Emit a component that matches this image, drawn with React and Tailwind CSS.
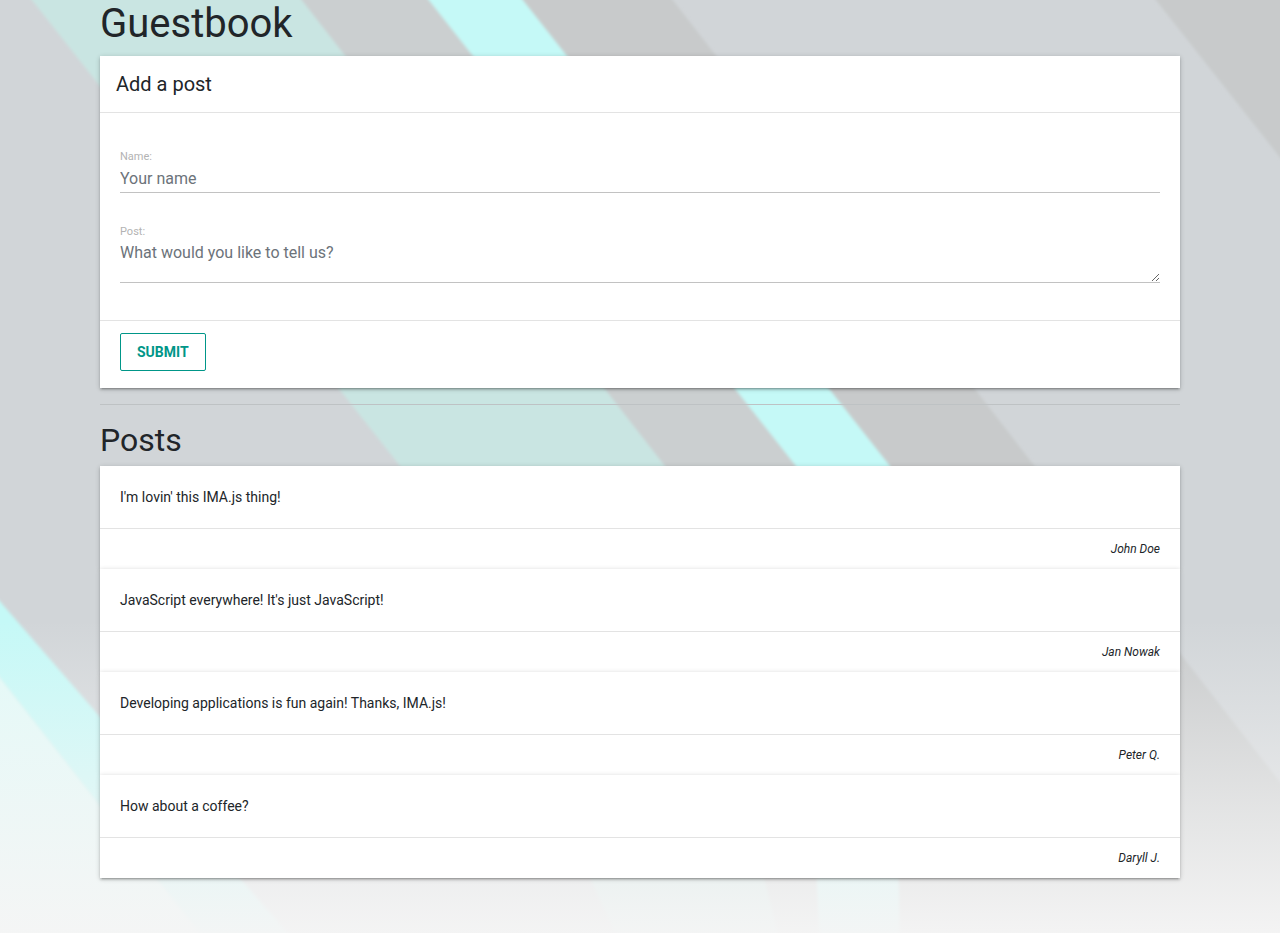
import React from 'react';

const posts = [
  { text: "I'm lovin' this IMA.js thing!", author: 'John Doe' },
  { text: "JavaScript everywhere! It's just JavaScript!", author: 'Jan Nowak' },
  { text: 'Developing applications is fun again! Thanks, IMA.js!', author: 'Peter Q.' },
  { text: 'How about a coffee?', author: 'Daryll J.' },
];

const cardShadow =
  'shadow-[0_2px_2px_0_rgba(0,0,0,0.14),0_3px_1px_-2px_rgba(0,0,0,0.12),0_1px_5px_0_rgba(0,0,0,0.2)]';

// diagonal material-style backdrop
const Backdrop = () => (
  <svg
    className="absolute inset-0 w-full h-full"
    viewBox="0 0 1280 933"
    preserveAspectRatio="none"
  >
    <defs>
      <linearGradient id="fade" x1="0" y1="620" x2="0" y2="933" gradientUnits="userSpaceOnUse">
        <stop offset="0" stopColor="#f5f5f5" stopOpacity="0" />
        <stop offset="0.6" stopColor="#f5f5f5" stopOpacity="0.6" />
        <stop offset="1" stopColor="#f5f5f5" stopOpacity="0.96" />
      </linearGradient>
      <filter id="soft" x="-5%" y="-5%" width="110%" height="110%">
        <feGaussianBlur stdDeviation="1.4" />
      </filter>
    </defs>
    <rect width="1280" height="933" fill="#d1d5d8" />
    <g filter="url(#soft)">
      <polygon points="24,-10 294,-10 665,466 780,943 620,943 400,466" fill="#c9e5e2" />
      <polygon points="294,-10 421,-10 796,466 820,943 780,943 665,466" fill="#cbcfd0" />
      <polygon points="421,-10 515,-10 890,466 900,943 820,943 796,466" fill="#c5f9f7" />
      <polygon points="515,-10 665,-10 1290,795 1290,943 900,943 890,466" fill="#c8cacb" />
      <polygon points="1148,-10 1290,-10 1290,170" fill="#c8cacb" />
      <polygon points="-10,590 296,943 207,943 -10,665" fill="#c5f9f7" />
      <polygon points="-10,665 207,943 -10,943" fill="#e2faf8" />
    </g>
    <rect y="620" width="1280" height="313" fill="url(#fade)" />
  </svg>
);

const PostCard = ({ text, author }) => (
  <article className={`relative bg-white ${cardShadow}`}>
    <div className="px-5 py-5 text-sm leading-[22px] border-b border-[#e3e3e3]">{text}</div>
    <div className="px-5 py-[11px] text-xs leading-[18px] italic text-right">{author}</div>
  </article>
);

export default function App() {
  return (
    <div className="relative min-h-screen overflow-hidden font-['Roboto','Liberation_Sans',sans-serif] text-[#212529]">
      <Backdrop />
      <div className="relative mx-auto w-[1080px] pb-[40px]">
        <h1 className="text-[40px] leading-[48px] font-normal mb-2">Guestbook</h1>

        <section className={`bg-white ${cardShadow}`}>
          <div className="h-[57px] px-4 flex items-center border-b border-[#e3e3e3]">
            <h2 className="text-[20px] leading-6">Add a post</h2>
          </div>
          <div className="px-5 pt-[36px] pb-[37px]">
            <label className="block text-[11px] leading-4 text-[#b3b3b3]">Name:</label>
            <input
              type="text"
              placeholder="Your name"
              className="block w-full h-[28px] pt-[1px] pb-[2px] text-base leading-6 bg-transparent border-b border-[#c2c2c2] outline-none placeholder:text-[#6c737a]"
            />
            <label className="block mt-[31px] text-[11px] leading-4 text-[#b3b3b3]">Post:</label>
            <textarea
              placeholder="What would you like to tell us?"
              className="block w-full h-[43px] pt-[1px] text-base leading-6 bg-transparent border-b border-[#c2c2c2] outline-none placeholder:text-[#6c737a]"
            />
          </div>
          <div className="border-t border-[#e3e3e3] px-5 pt-3 pb-[17px]">
            <button className="h-[38px] px-4 border border-[#009688] rounded-[2px] bg-white text-[#009688] text-sm font-bold uppercase leading-5">
              Submit
            </button>
          </div>
        </section>

        <hr className="mt-4 border-0 border-t border-[#bec2c4]" />
        <h2 className="mt-4 mb-[7px] text-[32px] leading-[38px] font-normal">Posts</h2>

        <div className="flex flex-col">
          {posts.map((p, i) => (
            <PostCard key={i} text={p.text} author={p.author} />
          ))}
        </div>
      </div>
    </div>
  );
}
